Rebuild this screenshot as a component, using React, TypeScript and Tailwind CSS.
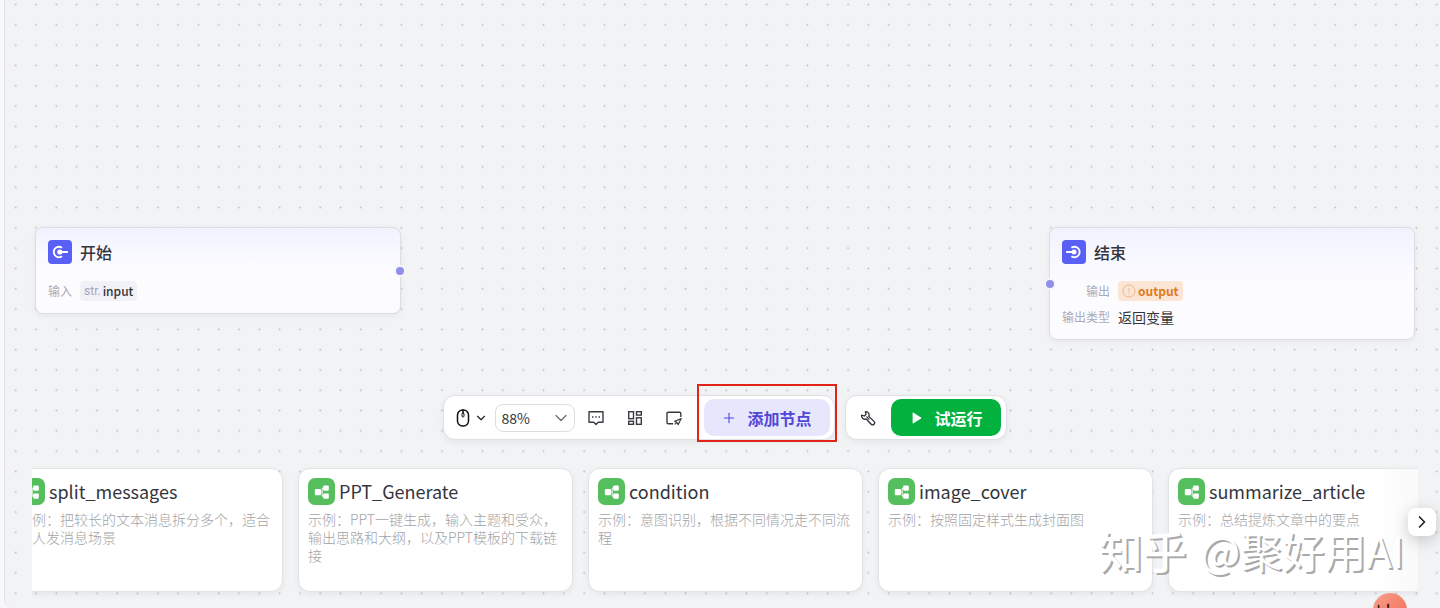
import React, { useState } from 'react'
import { ChevronDown, ChevronRight, Plus } from 'lucide-react'

const workflows = [
  { name: 'split_messages', desc: '示例：把较长的文本消息拆分多个，适合多人发消息场景' },
  { name: 'PPT_Generate', desc: '示例：PPT一键生成，输入主题和受众，输出思路和大纲，以及PPT模板的下载链接' },
  { name: 'condition', desc: '示例：意图识别，根据不同情况走不同流程' },
  { name: 'image_cover', desc: '示例：按照固定样式生成封面图' },
  { name: 'summarize_article', desc: '示例：总结提炼文章中的要点' },
]

const zoomLevels = ['50%', '88%', '100%', '150%']

function DotGrid() {
  return (
    <svg className="absolute inset-0 h-full w-full" aria-hidden="true">
      <defs>
        <pattern id="dots" x="0.6" y="-5.6" width="20.3" height="20.3" patternUnits="userSpaceOnUse">
          <circle cx="10.15" cy="10.15" r="0.9" fill="#b9bbc1" />
        </pattern>
      </defs>
      <rect width="100%" height="100%" fill="url(#dots)" />
    </svg>
  )
}

function NodeIcon({ flip = false }: { flip?: boolean }) {
  return (
    <span className="flex size-6 items-center justify-center rounded bg-[#5a5ff5]">
      <svg viewBox="0 0 18 18" className="size-[18px]" fill="none" stroke="#fff" strokeWidth="1.8" strokeLinecap="round">
        {flip ? (
          <>
            <path d="M7 4.4A5.2 5.2 0 1 1 7 13.6" />
            <path d="M1.8 9H8" />
            <circle cx="9" cy="9" r="2.5" fill="#fff" stroke="none" />
          </>
        ) : (
          <>
            <path d="M10.4 4.4A5.2 5.2 0 1 0 10.4 13.6" />
            <path d="M9 9H16.2" />
            <circle cx="8.8" cy="9" r="2.6" fill="#fff" stroke="none" />
          </>
        )}
      </svg>
    </span>
  )
}

function WorkflowIcon() {
  return (
    <span className="flex size-[27px] shrink-0 items-center justify-center rounded-[7px] bg-[#54bf5c]">
      <svg viewBox="0 0 16 16" className="size-4" fill="#fff">
        <rect x="0.8" y="5" width="6.2" height="6.2" rx="1" />
        <rect x="9.2" y="1.4" width="5.6" height="5.4" rx="1" />
        <rect x="9.2" y="9.4" width="5.6" height="5.4" rx="1" />
        <path d="M6.5 8.1H8.2V4.2H10M8.2 8.1V12.2H10" fill="none" stroke="#fff" strokeWidth="0.9" />
      </svg>
    </span>
  )
}

function MouseIcon() {
  return (
    <svg viewBox="0 0 14 18" className="h-[18px] w-3.5" fill="none" stroke="#111" strokeWidth="1.5" strokeLinecap="round">
      <rect x="1.5" y="1" width="11" height="16" rx="5" />
      <path d="M7 1.2V4" />
      <rect x="6" y="4" width="2" height="4" rx="1" strokeWidth="1" />
    </svg>
  )
}

function CommentIcon() {
  return (
    <svg viewBox="0 0 16 16" className="size-4" fill="none" stroke="#3a3b42" strokeWidth="1.4" strokeLinejoin="round">
      <path d="M1 1.8H15V12.2H10.2L8 14.4L5.8 12.2H1Z" />
      <path d="M4 7H5.4M7.3 7H8.7M10.6 7H12" strokeWidth="1.6" />
    </svg>
  )
}

function LayoutIcon() {
  return (
    <svg viewBox="0 0 16 16" className="size-4" fill="none" stroke="#3a3b42" strokeWidth="1.4">
      <rect x="1.7" y="1.7" width="4.8" height="7" />
      <rect x="9.5" y="1.7" width="4.8" height="3.4" />
      <rect x="1.7" y="11.3" width="4.8" height="3" />
      <rect x="9.5" y="7.8" width="4.8" height="6.5" />
    </svg>
  )
}

function NoteIcon() {
  return (
    <svg viewBox="0 0 16 16" className="size-4" fill="none" stroke="#3a3b42" strokeWidth="1.4" strokeLinejoin="round">
      <path d="M7.2 13.8H2.2A1.2 1.2 0 0 1 1 12.6V3.4A1.2 1.2 0 0 1 2.2 2.2H13.6A1.2 1.2 0 0 1 14.8 3.4V7" />
      <path d="M15.2 8.6L8.6 11.2L10.8 12.4L12.2 14.6Z" strokeWidth="1.2" />
      <path d="M10.8 12.4L8.8 14.4" strokeWidth="1.2" />
    </svg>
  )
}

function WrenchIcon() {
  return (
    <svg viewBox="0 0 16 16" className="size-4" fill="none" stroke="#2e2f36" strokeWidth="1.3" strokeLinejoin="round" strokeLinecap="round">
      <path d="M5.4 1.6L6 4.4L4.4 6L1.6 5.2C1.2 7.8 3.6 10 6.2 9L11.2 14.2A1.9 1.9 0 0 0 14 11.4L8.8 6.4C9.8 3.8 8 1.2 5.4 1.6Z" />
      <path d="M6.8 6.9L9 9.1" />
    </svg>
  )
}

function Port({ side }: { side: 'left' | 'right' }) {
  return (
    <span
      className={`absolute top-1/2 size-3 -translate-y-1/2 rounded-full border-2 border-[#f5f5fc] bg-[#8f90e9] ${
        side === 'left' ? '-left-1.5' : '-right-1.5'
      }`}
    />
  )
}

const nodeClass =
  'absolute top-[227px] w-[366px] rounded-lg border border-[#dcdde5] bg-[#fcfcff] bg-linear-to-b from-[#f2f2ff] to-[#fcfcff] to-50% p-3 shadow-[0_2px_6px_rgba(0,0,0,0.05)]'

export default function App() {
  const [zoom, setZoom] = useState('88%')

  return (
    <div className="flex h-screen bg-[#f8f8fb] pl-1 font-['Noto_Sans_CJK_SC',sans-serif] text-[#34353c]">
      <main className="relative flex min-w-0 flex-1 flex-col overflow-hidden rounded-bl-lg border-l border-[#e4e5ea] bg-[#f2f3f5]">
        <DotGrid />

        {/* canvas nodes */}
        <div className="relative flex-1">
          <section className={`${nodeClass} left-[30px]`}>
            <header className="flex items-center gap-2">
              <NodeIcon />
              <h2 className="text-base leading-6 font-medium">开始</h2>
            </header>
            <div className="mt-[17px] flex h-5 items-center gap-2">
              <span className="text-xs text-[#a9abba]">输入</span>
              <span className="flex h-5 items-center gap-0.5 rounded bg-[#f1f1f8] px-1 text-xs font-medium">
                <span className="font-['Roboto','Noto_Sans_CJK_SC',sans-serif] font-normal text-[#a4a6b8]">str.</span>
                input
              </span>
            </div>
            <Port side="right" />
          </section>

          <section className={`${nodeClass} right-[25px]`}>
            <header className="flex items-center gap-2">
              <NodeIcon flip />
              <h2 className="text-base leading-6 font-medium">结束</h2>
            </header>
            <div className="mt-[17px] grid grid-cols-[auto_1fr] items-center gap-x-2 gap-y-1.5">
              <span className="text-right text-xs leading-5 text-[#a9abba]">输出</span>
              <span className="flex h-5 items-center gap-0.5 justify-self-start rounded bg-[#fbe6d6] px-1 text-xs font-bold text-[#e07c1c]">
                <svg viewBox="0 0 14 14" className="size-3.5" fill="none" stroke="#f3b484" strokeWidth="1">
                  <circle cx="7" cy="7" r="6" />
                  <path d="M7 3.8V7.8M7 9.2V10.2" />
                </svg>
                output
              </span>
              <span className="text-xs leading-5 text-[#a9abba]">输出类型</span>
              <span className="text-sm leading-5">返回变量</span>
            </div>
            <Port side="left" />
          </section>
        </div>

        {/* toolbar */}
        <div className="relative mb-5 ml-1 flex justify-center gap-2.5">
          <div className="flex h-[45px] items-center rounded-xl border border-[#dfe0e6] bg-white pr-1 pl-3 shadow-[0_2px_6px_rgba(0,0,0,0.06)]">
            <button className="flex items-center gap-1" aria-label="交互模式">
              <MouseIcon />
              <ChevronDown className="size-3.5 text-[#222]" strokeWidth={2} />
            </button>
            <label className="relative ml-[7px]">
              <select
                aria-label="缩放"
                value={zoom}
                onChange={(e) => setZoom(e.target.value)}
                className="h-7 w-20 appearance-none rounded-lg border border-[#dddee4] bg-white pl-1.5 text-sm"
              >
                {zoomLevels.map((z) => (
                  <option key={z}>{z}</option>
                ))}
              </select>
              <ChevronDown className="pointer-events-none absolute top-1 right-1 size-5 text-[#6a6b73]" strokeWidth={1.5} />
            </label>
            <div className="ml-[13px] flex gap-[23px]">
              <button aria-label="评论"><CommentIcon /></button>
              <button aria-label="优化布局"><LayoutIcon /></button>
              <button aria-label="注释"><NoteIcon /></button>
            </div>
            <div className="relative ml-[22px]">
              <button className="flex h-[37px] w-[126px] items-center justify-center gap-2.5 rounded-[10px] bg-[#e6e6fd] font-bold text-[#5147d6]">
                <Plus className="size-4" strokeWidth={1.6} />
                添加节点
              </button>
              {/* highlight frame */}
              <span className="pointer-events-none absolute -inset-x-[7px] -top-[15px] -bottom-1.5 border-2 border-[#e2231a]" />
            </div>
          </div>

          <div className="flex h-[45px] items-center rounded-xl border border-[#dfe0e6] bg-white pr-[5px] pl-3.5 shadow-[0_2px_6px_rgba(0,0,0,0.06)]">
            <button aria-label="调试"><WrenchIcon /></button>
            <button className="ml-[15px] flex h-[37px] w-[110px] items-center justify-center gap-3 rounded-[10px] bg-[#03b13e] pl-1 font-bold text-white">
              <svg viewBox="0 0 10 12" className="h-3 w-2.5" fill="#fff">
                <path d="M0.6 1.2Q0.6 0.2 1.6 0.8L9 5.4Q9.8 6 9 6.6L1.6 11.2Q0.6 11.8 0.6 10.8Z" />
              </svg>
              试运行
            </button>
          </div>
        </div>

        {/* workflow cards */}
        <div className="relative mr-[22px] ml-[27px]">
          <div className="overflow-hidden pt-2 pb-4">
            <ul className="-ml-6 flex gap-[15px]">
              {workflows.map((w) => (
                <li
                  key={w.name}
                  className="h-[124px] w-[275px] shrink-0 rounded-xl border border-[#e0e3e4] bg-white px-[9px] pt-[9px] shadow-[0_2px_6px_rgba(0,0,0,0.06)]"
                >
                  <div className="flex items-center gap-1">
                    <WorkflowIcon />
                    <h3 className="text-lg leading-[27px]">{w.name}</h3>
                  </div>
                  <p className="mt-[5px] text-sm leading-[18px] font-light text-[#a2a3a6]">{w.desc}</p>
                </li>
              ))}
            </ul>
          </div>
          <div className="pointer-events-none absolute top-2 right-0 bottom-4 w-10 bg-linear-to-r from-transparent to-[#f2f3f5]/50" />
          <button
            aria-label="下一页"
            className="absolute top-12 -right-[18px] flex size-7 items-center justify-center rounded-lg bg-white shadow-[0_4px_16px_rgba(0,0,0,0.2)]"
          >
            <ChevronRight className="size-5 text-[#1f2026]" strokeWidth={2} />
          </button>
        </div>

        {/* assistant mascot */}
        <svg viewBox="0 0 36 36" className="absolute right-8 -bottom-5 size-9" aria-hidden="true">
          <defs>
            <linearGradient id="mascot" x1="0" y1="0" x2="1" y2="1">
              <stop offset="0" stopColor="#f6a08e" />
              <stop offset="1" stopColor="#f4694f" />
            </linearGradient>
          </defs>
          <circle cx="18" cy="18" r="17" fill="url(#mascot)" />
          <ellipse cx="6.6" cy="14.6" rx="0.9" ry="2.2" fill="#4a1c1c" />
          <ellipse cx="16.2" cy="14" rx="1.1" ry="2.4" fill="#4a1c1c" />
        </svg>

        {/* watermark */}
        <p className="pointer-events-none absolute right-9 bottom-10 flex items-center gap-3.5 text-[42px] leading-[36px] text-white [text-shadow:2px_2px_0_#aaa]">
          <span className="text-[44px] font-medium">知乎</span>
          <span>@聚好用AI</span>
        </p>
      </main>
    </div>
  )
}
